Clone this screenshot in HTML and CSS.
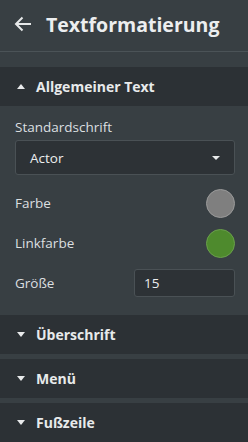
FILE: index.html
```html
<!DOCTYPE html>
<html>
	<head>
		<meta charset="UTF-8" />
		<title>Textformatierung</title>
		<link rel="stylesheet" href="styles.css">
	</head>
	<body>
		<div class="panel">
			<div class="top-bar">
				<svg class="back" width="18" height="16" viewBox="0 0 18 16">
					<path d="M17 8H2M8.5 1.5L2 8l6.5 6.5" fill="none" stroke="#e6e8e9" stroke-width="2" />
				</svg>
				<h1>Textformatierung</h1>
			</div>

			<div class="section open">
				<div class="section-head">
					<span class="caret up"></span>
					<span>Allgemeiner Text</span>
				</div>
				<div class="section-body">
					<label class="label">Standardschrift</label>
					<div class="select">
						<span>Actor</span>
						<span class="caret small"></span>
					</div>
					<div class="row">
						<span>Farbe</span>
						<span class="swatch gray"></span>
					</div>
					<div class="row">
						<span>Linkfarbe</span>
						<span class="swatch green"></span>
					</div>
					<div class="row">
						<span>Größe</span>
						<div class="input">15</div>
					</div>
				</div>
			</div>

			<div class="section">
				<div class="section-head">
					<span class="caret"></span>
					<span>Überschrift</span>
				</div>
			</div>
			<div class="section">
				<div class="section-head">
					<span class="caret"></span>
					<span>Menü</span>
				</div>
			</div>
			<div class="section">
				<div class="section-head">
					<span class="caret"></span>
					<span>Fußzeile</span>
				</div>
			</div>
		</div>
	</body>
</html>
```

FILE: styles.css
```css
* {
	margin: 0;
	padding: 0;
	box-sizing: border-box;
}

body {
	background-color: #383f43;
	font-family: "Open Sans", "Liberation Sans", sans-serif;
	color: #e4e6e7;
}

.panel {
	width: 248px;
	height: 442px;
	overflow: hidden;
	display: flex;
	flex-direction: column;
	gap: 5px;
}

.panel > * {
	flex-shrink: 0;
}

.top-bar {
	height: 52px;
	display: flex;
	align-items: center;
	gap: 14px;
	padding: 0 14px 3px 14px;
	border-bottom: 1px solid #4b5357;
	margin-bottom: 10px;
}

.top-bar h1 {
	font-size: 19.5px;
	font-weight: 700;
	color: #eceeef;
}

.section-head {
	height: 39px;
	background-color: #2c3135;
	display: flex;
	align-items: center;
	gap: 11px;
	padding: 0 17px;
	font-size: 14px;
	font-weight: 700;
	color: #e8eaeb;
}

.caret {
	width: 0;
	height: 0;
	border-left: 4.5px solid transparent;
	border-right: 4.5px solid transparent;
	border-top: 5px solid #e8eaeb;
}

.caret.up {
	border-top: 0;
	border-bottom: 5px solid #e8eaeb;
}

.caret.small {
	border-left-width: 4px;
	border-right-width: 4px;
	border-top-width: 4px;
}

.section-body {
	padding: 13px 13px 7px 15px;
	font-size: 13.5px;
	color: #dcdfe0;
}

.label {
	display: block;
	line-height: 17px;
	margin-bottom: 4px;
}

.select {
	height: 35px;
	background-color: #2d3236;
	border: 1px solid #4a5155;
	border-radius: 3px;
	display: flex;
	align-items: center;
	justify-content: space-between;
	padding: 0 14px 0 14px;
	font-size: 13.5px;
	color: #eceeef;
	margin-bottom: 8px;
}

.row {
	height: 40px;
	display: flex;
	align-items: center;
	justify-content: space-between;
}

.swatch {
	width: 29px;
	height: 29px;
	border-radius: 50%;
	border: 1px solid #9a9a9a;
}

.swatch.gray {
	background-color: #7f7f7f;
}

.swatch.green {
	background-color: #4e8a2d;
	border-color: #6a9f4c;
}

.input {
	width: 101px;
	height: 28px;
	background-color: #2d3236;
	border: 1px solid #4a5155;
	border-radius: 3px;
	padding: 0 9px;
	display: flex;
	align-items: center;
	font-size: 13.5px;
	color: #eceeef;
}
```
